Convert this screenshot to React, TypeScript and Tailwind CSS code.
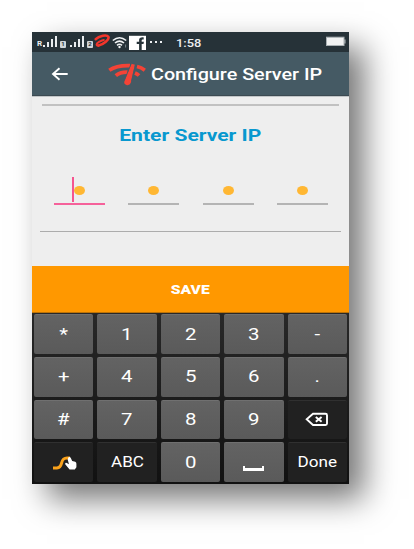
import type { ReactNode } from 'react';

function Stretch({ children, className = '' }: { children: ReactNode; className?: string }) {
  return <span className={`inline-block whitespace-nowrap ${className}`}>{children}</span>;
}

function Signal() {
  return (
    <svg width="15" height="12" viewBox="0 0 15 12" fill="#e8ecee" shapeRendering="crispEdges">
      <rect x="0" y="9" width="2" height="2" />
      <rect x="4" y="6" width="2" height="5" />
      <rect x="8" y="3" width="2" height="8" />
      <rect x="12" y="0" width="2" height="11" />
    </svg>
  );
}

function SimBadge({ label }: { label: string }) {
  return (
    <span className="flex h-[7px] w-[6px] items-center justify-center rounded-[1px] bg-[#cfd5d8] text-[6px] leading-none font-bold text-[#263238]">
      {label}
    </span>
  );
}

function StatusBar() {
  return (
    <div className="flex h-5 items-center bg-[#263238] pl-[5px] text-[#eceff1]">
      <span className="mt-[4px] w-[6px] text-[8px] leading-none font-bold">R</span>
      <Signal />
      <div className="mt-[4px] ml-[2px] w-[10px]"><SimBadge label="1" /></div>
      <Signal />
      <div className="mt-[4px] ml-[2px] w-[7px]"><SimBadge label="2" /></div>
      <svg className="mt-[-2px]" width="17" height="14" viewBox="0 0 17 14" fill="none" strokeLinecap="round">
        <path d="M1.8 5.2C5 1.6 13 .3 14.4 2.8C15.6 5.6 9.5 10.5 4.6 11.6" stroke="#f4352b" strokeWidth="2.6" />
        <path d="M4.6 11.6C1.6 11.8 2.2 9.4 5 7.9C7 6.8 9.2 5.9 9.8 5.9" stroke="#f4352b" strokeWidth="2" />
      </svg>
      <svg className="ml-[1px]" width="17" height="13" viewBox="0 0 17 13" fill="none" stroke="#f1f3f4" strokeWidth="1.6">
        <path d="M.8 4.5Q7.5 -1 14.2 4.5M3 7Q7.5 3.2 12 7M5 9.3Q7.5 7.2 10 9.3" />
        <circle cx="7.5" cy="11" r="1.2" fill="#f1f3f4" stroke="none" />
        <path d="M13.6 8.5v3" stroke="#78858b" strokeWidth="1" />
      </svg>
      <svg width="17" height="15" viewBox="0 0 17 15">
        <rect x="0" y=".8" width="17" height="14.2" fill="#fff" />
        <path d="M10.1 15V9H7.7V6.8h2.4V5.1C10.1 3.2 11.5 2.1 14.7 2.4v2.1c-1.5-.1-2 .1-2 1v1.3h2.2L14.5 9h-1.8v6z" fill="#263238" />
      </svg>
      <svg className="ml-[3px]" width="14" height="3" fill="#eceff1">
        <rect x="1" y="0" width="2" height="2" /><rect x="6" y="0" width="2" height="2" /><rect x="11" y="0" width="2" height="2" />
      </svg>
      <Stretch className="mt-[2px] ml-[13px] origin-left scale-x-[1.17] text-[11px] leading-none font-medium">1:58</Stretch>
      <svg className="mr-[3px] mb-[2px] ml-auto" width="20" height="11" viewBox="0 0 20 11">
        <rect x=".5" y="1.2" width="17.5" height="8.3" fill="#f1f2f2" stroke="#aab1b4" />
        <rect x="18.3" y="3.5" width="1.2" height="4" fill="#b4babd" />
      </svg>
    </div>
  );
}

function AppBar() {
  return (
    <div className="flex h-11 items-center border-b border-[#3c4a52] bg-[#455a64] text-white">
      <svg className="ml-[19px]" width="18" height="14" viewBox="0 0 18 14" fill="none" stroke="#fff" strokeWidth="1.9">
        <path d="M16.7 7H2M8.5 1.2L2 7l6.5 5.8" />
      </svg>
      <svg className="mt-[2px] ml-[39px]" width="38" height="23" viewBox="0 0 38 23">
        <g fill="none" stroke="#f44336" strokeWidth="3.7">
          <path d="M1.3 7.2Q8.5 2.2 22 2.6M29 3.5Q33.4 4.6 36.8 7.2" />
          <path d="M7.8 12.6Q12 8.9 19.5 9.1M27 10Q29.4 11 31 12.5" />
        </g>
        <path d="M23.5.8L27 1.7L22.8 19.8Q22 22.4 19 22.2Q15.4 21.5 16.4 18.6Z" fill="#f44336" />
        <path d="M23 1L16.1 17.5M27.4 1.5L23.6 18" fill="none" stroke="#455a64" strokeWidth=".8" />
      </svg>
      <Stretch className="mt-[2px] ml-[5px] origin-left scale-x-[1.235] text-[16px] font-medium">Configure Server IP</Stretch>
    </div>
  );
}

function IpField({ active = false }: { active?: boolean }) {
  return (
    <div className={`relative flex h-[28px] w-[51px] justify-center border-b-2 pt-[9px] ${active ? 'border-[#f5619a]' : 'border-[#b4b4b4]'}`}>
      {active && <span className="absolute top-0 left-[18px] h-[25px] w-[2px] bg-[#f5558f]" />}
      <span className="h-[9px] w-[11px] rounded-[50%] bg-[#ffb733]" />
    </div>
  );
}

function Key({ children, dark = false }: { children: ReactNode; dark?: boolean }) {
  return (
    <div className={`flex items-center justify-center rounded-[2px] border-t text-[17px] text-white ${dark ? 'border-[#303030] bg-[#212121]' : 'border-[#707070] bg-linear-to-b from-[#636363] to-[#5a5a5a]'}`}>
      {children}
    </div>
  );
}

function Keyboard() {
  const label = (text: string) => <Stretch className="scale-x-[1.2]">{text}</Stretch>;
  return (
    <div className="grid h-[171px] grid-cols-5 grid-rows-4 gap-x-[4px] gap-y-[3px] bg-linear-to-b from-[#282828] to-[#111111] px-[2px] pt-[1px] pb-[2px]">
      {['*', '1', '2', '3', '-', '+', '4', '5', '6', '.', '#', '7', '8', '9'].map((text) => (
        <Key key={text}>{label(text)}</Key>
      ))}
      <Key dark>
        <svg width="24" height="15" viewBox="0 0 24 15" fill="none" stroke="#fff">
          <path d="M8 1.7H20.5Q22 1.7 22 3.2V11.5Q22 13 20.5 13H8L1.7 7.3Z" strokeWidth="1.9" />
          <path d="M10.8 5L16.6 9.8M16.6 5L10.8 9.8" strokeWidth="2" />
        </svg>
      </Key>
      <Key dark>
        <svg width="26" height="16" viewBox="0 0 26 16">
          <path d="M2 12.9H6C13 12.9 8 3 16 3h3" fill="none" stroke="#faa21b" strokeWidth="3" />
          <path d="M17.3 2.6Q18.8 1.2 19.8 3l1.4 3 3 .7q1.2.5 1.2 2v3.5L23.8 14.5h-5.2L14.2 9.2q-.2-1.8 1.6-1.2l2.2 1.2-1.3-4.5z" fill="#fff" />
        </svg>
      </Key>
      <Key dark><Stretch className="scale-x-[1.14] text-[15px]">ABC</Stretch></Key>
      <Key>{label('0')}</Key>
      <Key>
        <svg className="mt-[12px]" width="21" height="6" fill="none" stroke="#fff">
          <path d="M1 0V4" strokeWidth="2" />
          <path d="M20 0V4" strokeWidth="2" />
          <path d="M0 3.5H21" strokeWidth="3" />
        </svg>
      </Key>
      <Key dark><Stretch className="scale-x-[1.14] text-[15px]">Done</Stretch></Key>
    </div>
  );
}

export default function App() {
  return (
    <div className="h-[549px] w-[414px] overflow-hidden bg-white p-8 font-['Roboto',sans-serif]">
      <div className="flex h-[452px] w-[317px] flex-col bg-[#eeeeee] shadow-[15px_15px_30px_rgba(0,0,0,0.54)]">
        <StatusBar />
        <AppBar />
        <div className="flex h-[170px] flex-col border-t border-[#c2c6c8]">
          <div className="mt-[7px] ml-[10px] h-[2px] w-[297px] bg-[#c1c1c1]" />
          <h1 className="mt-[17px] text-center text-[17px] leading-6 font-bold text-[#0898cf]">
            <Stretch className="scale-x-[1.24]">Enter Server IP</Stretch>
          </h1>
          <div className="mt-[30px] flex justify-between pr-[21px] pl-[22px]">
            <IpField active />
            <IpField />
            <IpField />
            <IpField />
          </div>
          <div className="mt-[26px] ml-[8px] h-px w-[301px] bg-[#acacac]" />
        </div>
        <button className="h-[47px] border-b border-[#bd7306] bg-[#ff9800] pt-[2px] text-[13px] font-black text-white">
          <Stretch className="scale-x-[1.2]">SAVE</Stretch>
        </button>
        <Keyboard />
      </div>
    </div>
  );
}
